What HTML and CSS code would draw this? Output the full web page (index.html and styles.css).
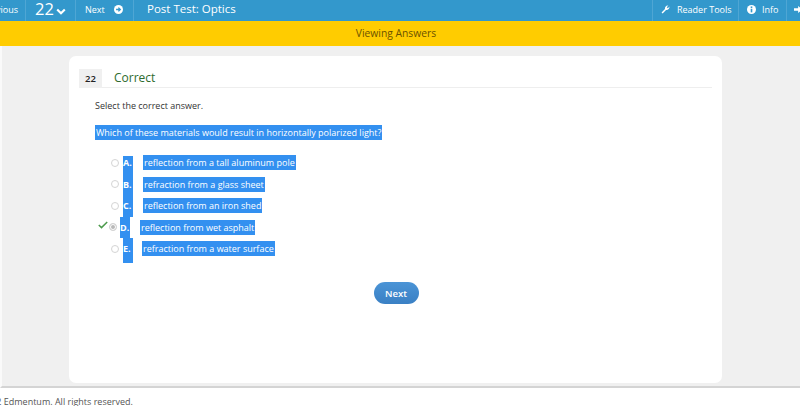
FILE: index.html
```html
<!DOCTYPE html>
<html lang="en">
<head>
<meta charset="utf-8">
<title>Post Test: Optics</title>
<link rel="stylesheet" href="styles.css">
</head>
<body>
<header class="topbar">
  <div class="nav-item prev"><span>Previous</span></div>
  <div class="nav-item number"><span class="big">22</span>
    <svg class="chev" width="10" height="7" viewBox="0 0 10 7"><path d="M1.2 1.4 5 5.2 8.8 1.4" fill="none" stroke="#fff" stroke-width="2.1"/></svg>
  </div>
  <div class="nav-item next"><span>Next</span>
    <svg width="9" height="9" viewBox="0 0 10 10"><circle cx="5" cy="5" r="5" fill="#fff"/><path d="M2.3 5h4.4M4.9 2.9 7 5 4.9 7.1" fill="none" stroke="#3398cc" stroke-width="1.5"/></svg>
  </div>
  <div class="title">Post Test: Optics</div>
  <div class="nav-item tool reader">
    <svg width="9" height="9" viewBox="0 0 10 10"><path d="M0.6 8.2 4.4 4.4C4 2.6 5.4.4 8.2.6L6.4 2.4 7.6 3.6 9.4 1.8C9.6 4.6 7.4 6 5.6 5.6L1.8 9.4Z" fill="#fff"/></svg>
    <span>Reader Tools</span></div>
  <div class="nav-item tool info">
    <svg width="9" height="9" viewBox="0 0 10 10"><circle cx="5" cy="5" r="5" fill="#fff"/><rect x="4.1" y="1.6" width="1.8" height="1.7" fill="#3398cc"/><rect x="4.1" y="4.2" width="1.8" height="4" fill="#3398cc"/></svg>
    <span>Info</span></div>
  <div class="nav-item tool end">
    <svg width="9" height="9" viewBox="0 0 10 10"><path d="M0 3.6h4.6V1L9.5 5 4.6 9V6.4H0Z" fill="#fff"/></svg>
  </div>
</header>
<div class="banner">Viewing Answers</div>
<main class="stage">
  <section class="card">
    <div class="card-head"><span class="qnum">22</span><h1>Correct</h1></div>
    <p class="prompt">Select the correct answer.</p>
    <p class="question"><span class="sel">Which of these materials would result in horizontally polarized light?</span></p>
    <ul class="answers">
      <li class="answer first"><span class="radio"></span><span class="letter">A.</span><span class="sel text">reflection from a tall aluminum pole</span></li>
      <li class="answer"><span class="radio"></span><span class="letter">B.</span><span class="sel text">refraction from a glass sheet</span></li>
      <li class="answer"><span class="radio"></span><span class="letter">C.</span><span class="sel text">reflection from an iron shed</span></li>
      <li class="answer chosen">
        <svg class="tick" width="10" height="8" viewBox="0 0 10 8"><path d="M.8 4 3.5 6.6 9.2 1" fill="none" stroke="#4c9a4c" stroke-width="1.5"/></svg>
        <span class="radio on"></span><span class="letter">D.</span><span class="sel text">reflection from wet asphalt</span></li>
      <li class="answer last"><span class="radio"></span><span class="letter">E.</span><span class="sel text">refraction from a water surface</span></li>
    </ul>
    <div class="actions"><button class="next-btn" type="button">Next</button></div>
  </section>
</main>
<footer class="footer"><span>© 2022 Edmentum. All rights reserved.</span></footer>
</body>
</html>
```
FILE: styles.css
```css
* { box-sizing: border-box; }
html, body { margin: 0; height: 408px; overflow: hidden; }
body { font-family: "Open Sans", "Noto Sans", sans-serif; background: #fff; color: #333; display: flex; flex-direction: column; }

.topbar { height: 21px; background: #3398cc; color: #fff; display: flex; align-items: stretch; flex: none; font-size: 9px; overflow: hidden; }
.nav-item { display: flex; align-items: center; border-right: 1px solid #4fa6d4; gap: 8px; padding-bottom: 3px; }
.prev { width: 60px; margin-left: -34px; padding-right: 7px; flex: none; justify-content: flex-end; }
.number { width: 50px; padding-left: 9px; gap: 2px; flex: none; }
.big { font-size: 16.5px; line-height: 1; }
.chev { margin-top: 4px; }
.next { width: 58px; padding-left: 9px; flex: none; gap: 9px; }
.title { flex: 1; font-size: 11.5px; padding-left: 13px; line-height: 18px; }
.tool { padding: 0 0 3px 8px; gap: 7px; flex: none; }
.reader { width: 87px; border-left: 1px solid #4fa6d4; }
.info { width: 48px; gap: 6px; }
.tool.end { padding-left: 7px; width: 13px; border-right: 0; overflow: hidden; }
.tool.end svg { flex: none; }

.banner { height: 25px; flex: none; background: #ffcc00; color: #6b5200; text-align: center; font-size: 10.3px; line-height: 25px; padding-right: 8px; }

.stage { height: 342px; flex: none; background: #f0f0f0; border-left: 2px solid #fafafa; border-bottom: 2px solid #d4d4d4; padding: 10px 78px 0 67px; }
.card { height: 327px; background: #fff; border-radius: 7px; padding: 13px 10px 0 10px; }
.card-head { display: flex; align-items: center; height: 19px; border-bottom: 1px solid #eee; }
.qnum { width: 23px; height: 19px; background: #f0f0f0; font-size: 9.5px; font-weight: 600; color: #222; text-align: center; line-height: 20px; }
h1 { margin: 0 0 0 12px; font-size: 12px; font-weight: 400; color: #2e6b2e; line-height: 18px; }

.prompt { margin: 11px 0 0 16px; font-size: 9px; line-height: 14px; color: #333; }
.question { margin: 12px 0 0 16px; font-size: 9px; line-height: 15px; }
.sel { background: #3390f0; color: #fff; padding: 0 1px; }
.question .sel { display: inline-block; white-space: nowrap; }

.answers { list-style: none; margin: 12px 0 0 0; padding: 0; }
.answer { position: relative; display: flex; align-items: center; height: 21.5px; font-size: 9px; padding-left: 32px; }
.radio { width: 8px; height: 8px; border-radius: 50%; background: #fff; border: 1px solid #d4d4d4; flex: none; }
.radio.on { background: #b8b8b8; box-shadow: inset 0 0 0 1px #fff; }
.letter { width: 10px; height: 21.5px; margin-left: 4px; background: #3390f0; color: #fff; font-weight: 700; font-size: 9px; line-height: 21.5px; flex: none; }
.text { margin-left: 10px; line-height: 15px; white-space: nowrap; }
.first .letter { height: 17.5px; align-self: flex-start; margin-top: 4px; line-height: 13.5px; }
.last .letter { height: 25px; align-self: flex-start; line-height: 21.5px; }
.last .text { margin-left: 9px; }
.chosen .letter { width: 10px; margin-left: 3px; }
.chosen .radio { margin-left: -2px; }
.chosen .text { margin-left: 10px; }
.tick { position: absolute; left: 19px; top: 4px; }

.actions { text-align: center; margin-top: 20px; padding-left: 1px; }
.next-btn { width: 45px; height: 22px; border: 0; border-radius: 11px; background: linear-gradient(#4b94d6, #3a80c4); color: #fff; font: 600 9.5px "Open Sans", sans-serif; padding: 0; }

.footer { height: 18px; flex: none; font-size: 9px; color: #555; line-height: 28px; overflow: hidden; white-space: nowrap; }
.footer span { display: block; margin-left: -29px; }
```
